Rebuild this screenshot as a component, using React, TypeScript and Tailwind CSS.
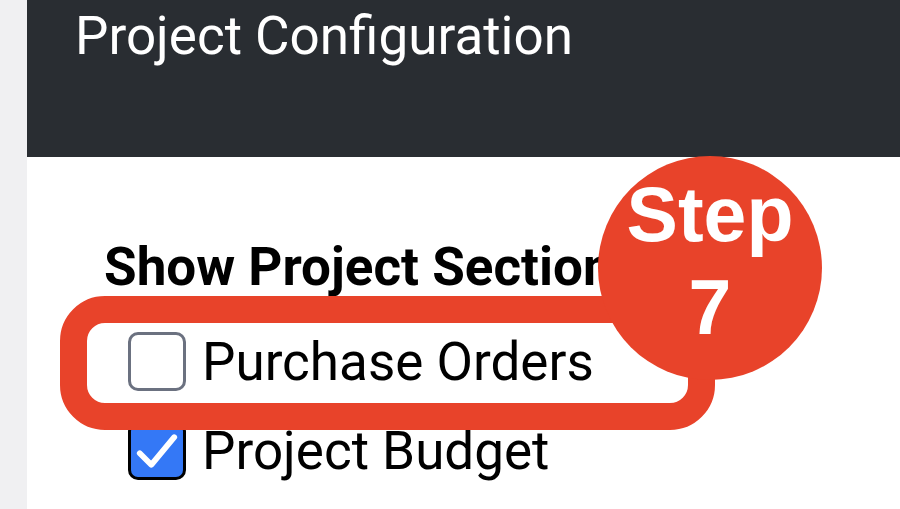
import React from "react";

function CheckOff() {
  return (
    <div className="w-[58px] h-[59px] shrink-0 rounded-[10px] border-[3px] border-[#6b7180] bg-white" />
  );
}

function CheckOn() {
  return (
    <div className="w-[58px] h-[59px] shrink-0 rounded-[10px] border-[3px] border-black bg-[#3478f6] flex items-center justify-center">
      <svg width="46" height="46" viewBox="0 0 40 40" fill="none">
        <path d="M5 22 L15 32 L35 8" stroke="white" strokeWidth="5" strokeLinecap="round" strokeLinejoin="round" />
      </svg>
    </div>
  );
}

export default function App() {
  return (
    <div
      className="relative w-[900px] h-[509px] overflow-hidden flex bg-white"
      style={{ fontFamily: "Roboto, 'Liberation Sans', sans-serif" }}
    >
      <div className="w-[27px] shrink-0 bg-[#f0f0f2]" />
      <div className="flex-1 flex flex-col">
        <div className="h-[157px] shrink-0 bg-[#292d32] pl-[48px] pt-[11px]">
          <div className="text-white text-[53px] leading-[50px]">Project Configuration</div>
        </div>
        <div className="flex-1 pl-[77px] pt-[85px]">
          <div className="text-black font-bold text-[53px] leading-[50px]">Show Project Sections</div>
          <div className="mt-[40px] pl-[24px] flex items-center gap-[16px] h-[59px]">
            <CheckOff />
            <span className="text-black text-[53px] leading-[50px]">Purchase Orders</span>
          </div>
          <div className="mt-[30px] pl-[24px] flex items-center gap-[16px] h-[59px]">
            <CheckOn />
            <span className="text-black text-[53px] leading-[50px]">Project Budget</span>
          </div>
        </div>
      </div>

      {/* annotation highlight */}
      <div className="absolute left-[60px] top-[296px] w-[655px] h-[134px] rounded-[45px] border-[27px] border-[#e8432a]" />
      <div
        className="absolute left-[598px] top-[156px] w-[224px] h-[224px] rounded-full bg-[#e8432a] flex flex-col items-center justify-center pb-[14px] text-white font-bold text-[77px] leading-[93px]"
        style={{ fontFamily: "'Liberation Sans', Arial, sans-serif" }}
      >
        <div>Step</div>
        <div>7</div>
      </div>
    </div>
  );
}
